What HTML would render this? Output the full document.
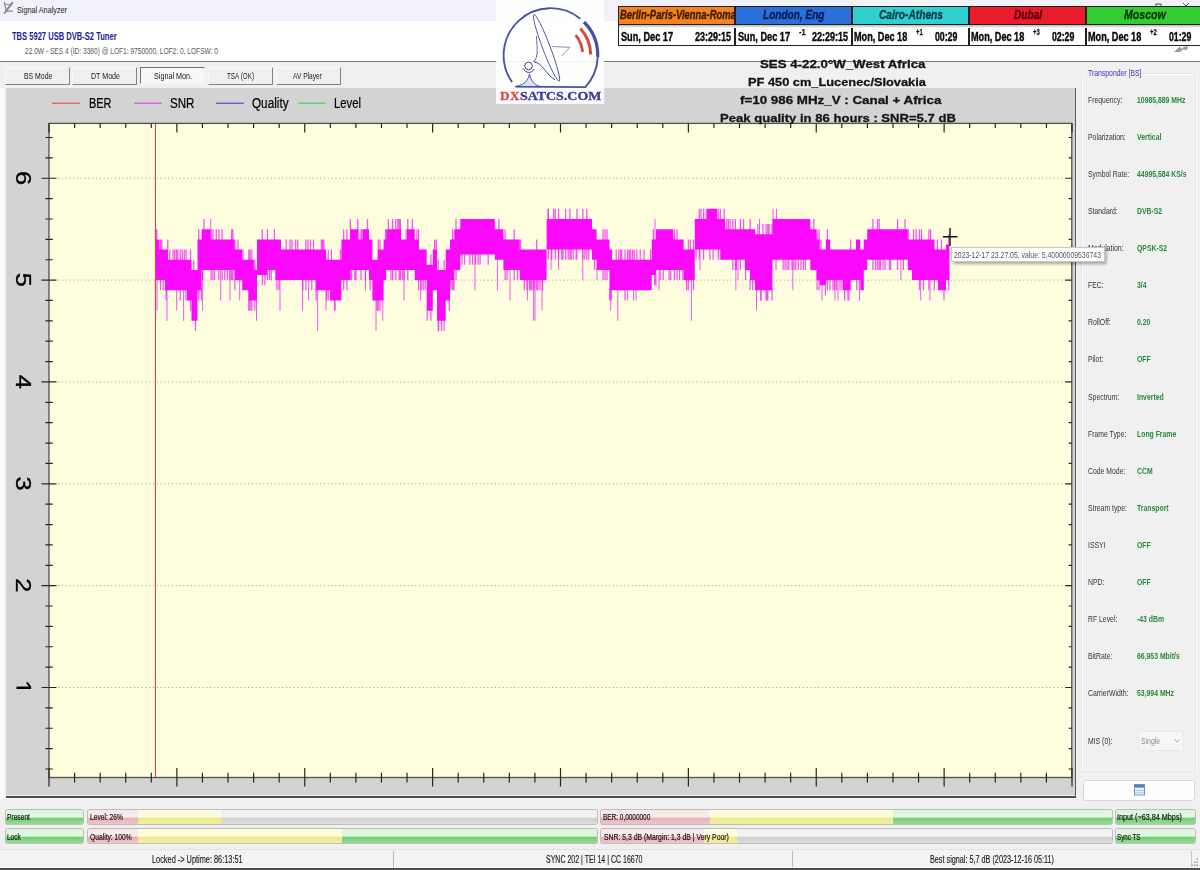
<!DOCTYPE html>
<html><head><meta charset="utf-8"><title>Signal Analyzer</title>
<style>
html,body{margin:0;padding:0}
body{width:1200px;height:870px;overflow:hidden;position:relative;background:#f0f0f0;font-family:"Liberation Sans",sans-serif}
.b{position:absolute;box-sizing:border-box}
.t{position:absolute;white-space:nowrap;line-height:1.2;transform-origin:0 50%;display:block;-webkit-font-smoothing:antialiased}
#root{position:absolute;left:0;top:0;width:1200px;height:870px;overflow:hidden;opacity:0.999}
svg{position:absolute;left:0;top:0}
</style></head><body><div id="root">
<div class="b" style="left:0px;top:0px;width:1200px;height:20.5px;background:#f1f1f9"></div>
<div class="b" style="left:0px;top:20.5px;width:1200px;height:40.5px;background:#ffffff"></div>
<div class="b" style="left:0px;top:61px;width:1200px;height:1.2px;background:#7a7a7a"></div>
<span class="t" style="left:16.80px;top:3.53px;font-size:9.8px;color:#1a1a1a;transform:scaleX(0.7401);">Signal Analyzer</span>
<svg width="16" height="16" viewBox="0 0 16 16" style="left:0px;top:0px"><g fill="none" stroke="#85858c" stroke-linecap="round"><path d="M4.3 2.3 L6.2 10.5" stroke-width="1.2"/><path d="M12.3 2.8 L4.6 13" stroke-width="2"/><path d="M5 4.2 L9.8 4.6" stroke-width="0.9"/><path d="M7.5 11.2 H12.2" stroke-width="1.3"/></g></svg>
<svg width="60" height="10" viewBox="0 0 60 10" style="left:1145px;top:0px"><g fill="none" stroke="#555" stroke-width="1"><rect x="11" y="4" width="5" height="6"/><path d="M38 3 L44 9 M44 3 L38 9"/></g></svg>
<span class="t" style="left:12.20px;top:30.02px;font-size:10.5px;color:#1c1c9c;transform:scaleX(0.7209);font-weight:bold;">TBS 5927 USB DVB-S2 Tuner</span>
<span class="t" style="left:24.50px;top:44.81px;font-size:9.5px;color:#5a5a5a;transform:scaleX(0.6950);">22.0W - SES 4 (ID: 3380) @ LOF1: 9750000, LOF2: 0, LOFSW: 0</span>
<div class="b" style="left:5px;top:67px;width:65px;height:17.6px;background:#f0f0f0;border:1px solid #f8f8f8;border-right:1.6px solid #828282;border-bottom:1.6px solid #828282"></div>
<span class="t" style="left:23.60px;top:70.03px;font-size:9.8px;color:#1a1a1a;transform:scaleX(0.7045);">BS Mode</span>
<div class="b" style="left:72px;top:67px;width:65px;height:17.6px;background:#f0f0f0;border:1px solid #f8f8f8;border-right:1.6px solid #828282;border-bottom:1.6px solid #828282"></div>
<span class="t" style="left:91.00px;top:70.03px;font-size:9.8px;color:#1a1a1a;transform:scaleX(0.7227);">DT Mode</span>
<div class="b" style="left:140px;top:66.8px;width:64.5px;height:17.7px;background:#f7f7f7;border:1px solid #f4f4f4;border-top:1.5px solid #707070;border-left:1.5px solid #707070"></div>
<span class="t" style="left:154.00px;top:70.03px;font-size:9.8px;color:#1a1a1a;transform:scaleX(0.7343);">Signal Mon.</span>
<div class="b" style="left:208px;top:67px;width:65px;height:17.6px;background:#f0f0f0;border:1px solid #f8f8f8;border-right:1.6px solid #828282;border-bottom:1.6px solid #828282"></div>
<span class="t" style="left:227.00px;top:70.03px;font-size:9.8px;color:#1a1a1a;transform:scaleX(0.6439);">TSA (OK)</span>
<div class="b" style="left:275.5px;top:67px;width:65.10000000000002px;height:17.6px;background:#f0f0f0;border:1px solid #f8f8f8;border-right:1.6px solid #828282;border-bottom:1.6px solid #828282"></div>
<span class="t" style="left:293.00px;top:70.03px;font-size:9.8px;color:#1a1a1a;transform:scaleX(0.6768);">AV Player</span>
<div class="b" style="left:0px;top:88px;width:3.6px;height:710px;background:#fafafa"></div>
<div class="b" style="left:6.4px;top:88px;width:1069.2px;height:707px;background:#d3d3d3"></div>
<div class="b" style="left:6.4px;top:795.6px;width:1069.8px;height:2.1px;background:#4c4c4c"></div>
<div class="b" style="left:0px;top:797.5px;width:1200px;height:1.2px;background:#fafafa"></div>
<div class="b" style="left:1074.8px;top:88px;width:1.2px;height:709.5px;background:#5c5c5c"></div>
<svg width="1200" height="870" viewBox="0 0 1200 870">
<rect x="49.0" y="123.4" width="1022.8" height="654.1" fill="#ffffe0"/>
<line x1="58.0" x2="1065.8" y1="687.50" y2="687.50" stroke="#98988a" stroke-width="0.9" stroke-dasharray="1.1 2.7"/>
<line x1="58.0" x2="1065.8" y1="585.65" y2="585.65" stroke="#98988a" stroke-width="0.9" stroke-dasharray="1.1 2.7"/>
<line x1="58.0" x2="1065.8" y1="483.80" y2="483.80" stroke="#98988a" stroke-width="0.9" stroke-dasharray="1.1 2.7"/>
<line x1="58.0" x2="1065.8" y1="381.95" y2="381.95" stroke="#98988a" stroke-width="0.9" stroke-dasharray="1.1 2.7"/>
<line x1="58.0" x2="1065.8" y1="280.10" y2="280.10" stroke="#98988a" stroke-width="0.9" stroke-dasharray="1.1 2.7"/>
<line x1="58.0" x2="1065.8" y1="178.25" y2="178.25" stroke="#98988a" stroke-width="0.9" stroke-dasharray="1.1 2.7"/>
<line x1="52" x2="80" y1="103.2" y2="103.2" stroke="#e82828" stroke-width="0.9"/>
<line x1="134" x2="162" y1="103.2" y2="103.2" stroke="#f020f0" stroke-width="0.9"/>
<line x1="216" x2="244" y1="103.2" y2="103.2" stroke="#2020d0" stroke-width="0.9"/>
<line x1="298" x2="326" y1="103.2" y2="103.2" stroke="#28d028" stroke-width="0.9"/>
<path d="M155.0 239.4 L159.5 239.4 L159.5 249.5 L165.0 249.5 L165.0 249.5 L168.0 249.5 L168.0 259.7 L187.0 259.7 L187.0 259.7 L191.5 259.7 L191.5 269.9 L197.5 269.9 L197.5 239.4 L201.7 239.4 L201.7 229.2 L210.3 229.2 L210.3 239.4 L234.5 239.4 L234.5 249.5 L242.2 249.5 L242.2 259.7 L248.3 259.7 L248.3 259.7 L253.4 259.7 L253.4 269.9 L257.0 269.9 L257.0 239.4 L267.0 239.4 L267.0 239.4 L276.0 239.4 L276.0 239.4 L281.0 239.4 L281.0 249.5 L315.5 249.5 L315.5 249.5 L326.0 249.5 L326.0 259.7 L330.0 259.7 L330.0 259.7 L341.4 259.7 L341.4 239.4 L350.0 239.4 L350.0 229.2 L358.6 229.2 L358.6 239.4 L363.0 239.4 L363.0 229.2 L369.0 229.2 L369.0 239.4 L372.4 239.4 L372.4 259.7 L377.6 259.7 L377.6 249.5 L383.6 249.5 L383.6 239.4 L386.2 239.4 L386.2 229.2 L401.0 229.2 L401.0 239.4 L407.0 239.4 L407.0 229.2 L414.7 229.2 L414.7 239.4 L419.0 239.4 L419.0 249.5 L426.7 249.5 L426.7 264.8 L432.8 264.8 L432.8 249.5 L437.0 249.5 L437.0 269.9 L445.7 269.9 L445.7 249.5 L450.0 249.5 L450.0 239.4 L454.3 239.4 L454.3 229.2 L460.3 229.2 L460.3 219.0 L494.8 219.0 L494.8 229.2 L503.4 229.2 L503.4 239.4 L519.8 239.4 L519.8 249.5 L546.6 249.5 L546.6 219.0 L550.0 219.0 L550.0 219.0 L592.0 219.0 L592.0 229.2 L596.6 229.2 L596.6 239.4 L609.5 239.4 L609.5 249.5 L612.0 249.5 L612.0 259.7 L651.7 259.7 L651.7 239.4 L656.0 239.4 L656.0 229.2 L673.3 229.2 L673.3 239.4 L683.6 239.4 L683.6 249.5 L694.8 249.5 L694.8 219.0 L707.0 219.0 L707.0 208.8 L717.2 208.8 L717.2 219.0 L720.7 219.0 L720.7 219.0 L725.0 219.0 L725.0 229.2 L744.8 229.2 L744.8 229.2 L750.0 229.2 L750.0 229.2 L755.0 229.2 L755.0 234.3 L772.4 234.3 L772.4 219.0 L810.3 219.0 L810.3 229.2 L816.4 229.2 L816.4 239.4 L819.8 239.4 L819.8 249.5 L825.9 249.5 L825.9 239.4 L830.2 239.4 L830.2 249.5 L843.0 249.5 L843.0 249.5 L850.0 249.5 L850.0 249.5 L856.0 249.5 L856.0 239.4 L860.3 239.4 L860.3 249.5 L863.8 249.5 L863.8 239.4 L867.2 239.4 L867.2 229.2 L907.8 229.2 L907.8 239.4 L912.0 239.4 L912.0 239.4 L934.5 239.4 L934.5 249.5 L938.0 249.5 L938.0 249.5 L946.0 249.5 L946.0 244.5 L949.5 244.5 L949.5 280.1 L946.0 280.1 L946.0 290.3 L938.0 290.3 L938.0 280.1 L934.5 280.1 L934.5 280.1 L912.0 280.1 L912.0 269.9 L907.8 269.9 L907.8 259.7 L867.2 259.7 L867.2 269.9 L863.8 269.9 L863.8 290.3 L860.3 290.3 L860.3 280.1 L856.0 280.1 L856.0 280.1 L850.0 280.1 L850.0 290.3 L843.0 290.3 L843.0 280.1 L830.2 280.1 L830.2 280.1 L825.9 280.1 L825.9 285.2 L819.8 285.2 L819.8 280.1 L816.4 280.1 L816.4 269.9 L810.3 269.9 L810.3 259.7 L772.4 259.7 L772.4 290.3 L755.0 290.3 L755.0 280.1 L750.0 280.1 L750.0 269.9 L744.8 269.9 L744.8 259.7 L725.0 259.7 L725.0 259.7 L720.7 259.7 L720.7 249.5 L717.2 249.5 L717.2 249.5 L707.0 249.5 L707.0 249.5 L694.8 249.5 L694.8 280.1 L683.6 280.1 L683.6 269.9 L673.3 269.9 L673.3 269.9 L656.0 269.9 L656.0 275.0 L651.7 275.0 L651.7 290.3 L612.0 290.3 L612.0 290.3 L609.5 290.3 L609.5 269.9 L596.6 269.9 L596.6 259.7 L592.0 259.7 L592.0 249.5 L550.0 249.5 L550.0 249.5 L546.6 249.5 L546.6 280.1 L519.8 280.1 L519.8 269.9 L503.4 269.9 L503.4 259.7 L494.8 259.7 L494.8 254.6 L460.3 254.6 L460.3 269.9 L454.3 269.9 L454.3 280.1 L450.0 280.1 L450.0 300.5 L445.7 300.5 L445.7 320.8 L437.0 320.8 L437.0 290.3 L432.8 290.3 L432.8 310.7 L426.7 310.7 L426.7 280.1 L419.0 280.1 L419.0 280.1 L414.7 280.1 L414.7 269.9 L407.0 269.9 L407.0 269.9 L401.0 269.9 L401.0 269.9 L386.2 269.9 L386.2 280.1 L383.6 280.1 L383.6 300.5 L377.6 300.5 L377.6 300.5 L372.4 300.5 L372.4 280.1 L369.0 280.1 L369.0 269.9 L363.0 269.9 L363.0 269.9 L358.6 269.9 L358.6 269.9 L350.0 269.9 L350.0 280.1 L341.4 280.1 L341.4 300.5 L330.0 300.5 L330.0 290.3 L326.0 290.3 L326.0 290.3 L315.5 290.3 L315.5 280.1 L281.0 280.1 L281.0 280.1 L276.0 280.1 L276.0 269.9 L267.0 269.9 L267.0 275.0 L257.0 275.0 L257.0 300.5 L253.4 300.5 L253.4 300.5 L248.3 300.5 L248.3 290.3 L242.2 290.3 L242.2 280.1 L234.5 280.1 L234.5 269.9 L210.3 269.9 L210.3 269.9 L201.7 269.9 L201.7 290.3 L197.5 290.3 L197.5 320.8 L191.5 320.8 L191.5 300.5 L187.0 300.5 L187.0 290.3 L168.0 290.3 L168.0 290.3 L165.0 290.3 L165.0 280.1 L159.5 280.1 L159.5 280.1 L155.0 280.1Z" fill="#fc08fc"/>
<path d="M155.5 240.4V229.2M155.5 279.1V290.3M156.8 240.4V229.2M160.5 250.5V239.4M160.5 279.1V290.3M161.8 250.5V239.4M163.1 279.1V290.3M166.1 289.3V300.5M167.8 250.5V239.4M169.8 260.7V249.5M173.0 260.7V249.5M174.7 260.7V249.5M176.4 260.7V249.5M177.7 260.7V249.5M180.3 260.7V249.5M180.3 289.3V300.5M182.3 260.7V249.5M184.3 260.7V249.5M186.0 260.7V249.5M186.0 289.3V300.5M190.6 260.7V249.5M190.6 299.5V310.7M193.8 270.9V259.7M195.5 319.8V331.0M198.8 240.4V229.2M198.8 289.3V300.5M201.4 289.3V300.5M202.7 268.9V280.1M204.0 230.2V219.0M211.2 240.4V229.2M211.2 268.9V280.1M212.9 240.4V229.2M212.9 268.9V280.1M214.6 268.9V280.1M216.3 240.4V229.2M218.9 240.4V229.2M218.9 268.9V280.1M222.1 240.4V229.2M222.1 268.9V280.1M224.7 268.9V280.1M227.3 268.9V280.1M229.9 268.9V280.1M231.6 240.4V229.2M231.6 268.9V280.1M232.9 240.4V229.2M232.9 268.9V280.1M234.9 250.5V239.4M234.9 279.1V290.3M238.1 250.5V239.4M243.0 260.7V249.5M248.8 260.7V249.5M248.8 299.5V310.7M250.1 260.7V249.5M250.1 299.5V310.7M251.8 260.7V249.5M251.8 299.5V310.7M253.5 270.9V259.7M254.8 270.9V259.7M254.8 299.5V310.7M262.3 240.4V229.2M262.3 274.0V285.2M264.9 274.0V285.2M267.5 240.4V229.2M267.5 268.9V280.1M269.5 268.9V280.1M271.2 268.9V280.1M274.4 240.4V229.2M275.7 268.9V280.1M277.0 279.1V290.3M279.0 279.1V290.3M286.1 250.5V239.4M290.0 250.5V239.4M292.0 250.5V239.4M295.7 250.5V239.4M297.7 250.5V239.4M302.9 279.1V290.3M305.9 250.5V239.4M305.9 279.1V290.3M307.9 250.5V239.4M310.5 250.5V239.4M311.8 279.1V290.3M313.5 250.5V239.4M316.1 289.3V300.5M321.3 250.5V239.4M322.6 250.5V239.4M323.9 250.5V239.4M326.5 289.3V300.5M328.2 260.7V249.5M328.2 289.3V300.5M331.4 260.7V249.5M334.7 299.5V310.7M340.5 260.7V249.5M343.7 240.4V229.2M343.7 279.1V290.3M346.9 240.4V229.2M346.9 279.1V290.3M350.3 230.2V219.0M350.3 268.9V280.1M351.6 268.9V280.1M354.8 268.9V280.1M356.1 268.9V280.1M357.8 230.2V219.0M361.0 240.4V229.2M361.0 268.9V280.1M362.3 240.4V229.2M365.5 268.9V280.1M367.5 230.2V219.0M370.1 279.1V290.3M377.0 299.5V310.7M378.3 250.5V239.4M378.3 299.5V310.7M380.0 250.5V239.4M380.0 299.5V310.7M385.7 240.4V229.2M388.3 230.2V219.0M390.9 268.9V280.1M392.6 230.2V219.0M392.6 268.9V280.1M395.8 230.2V219.0M395.8 268.9V280.1M397.8 230.2V219.0M399.1 230.2V219.0M399.1 268.9V280.1M400.4 230.2V219.0M400.4 268.9V280.1M402.4 268.9V280.1M404.1 268.9V280.1M406.1 240.4V229.2M407.8 230.2V219.0M407.8 268.9V280.1M412.4 230.2V219.0M416.9 240.4V229.2M418.6 240.4V229.2M418.6 279.1V290.3M421.2 279.1V290.3M423.2 279.1V290.3M425.2 279.1V290.3M427.2 309.7V320.8M430.9 265.8V254.6M430.9 309.7V320.8M434.6 250.5V239.4M436.3 250.5V239.4M438.3 270.9V259.7M438.3 319.8V331.0M441.5 319.8V331.0M444.1 270.9V259.7M444.1 319.8V331.0M449.3 299.5V310.7M451.0 279.1V290.3M452.7 240.4V229.2M452.7 279.1V290.3M454.0 279.1V290.3M456.0 230.2V219.0M456.0 268.9V280.1M461.9 253.6V264.8M464.5 253.6V264.8M469.9 253.6V264.8M472.5 253.6V264.8M475.5 253.6V264.8M478.1 253.6V264.8M480.1 253.6V264.8M488.2 253.6V264.8M498.9 230.2V219.0M505.1 240.4V229.2M505.1 268.9V280.1M507.1 268.9V280.1M514.2 240.4V229.2M514.2 268.9V280.1M517.4 268.9V280.1M520.6 250.5V239.4M524.3 279.1V290.3M526.9 279.1V290.3M529.5 279.1V290.3M530.8 279.1V290.3M532.1 279.1V290.3M534.1 279.1V290.3M536.7 250.5V239.4M536.7 279.1V290.3M538.0 279.1V290.3M540.0 279.1V290.3M542.6 279.1V290.3M548.4 220.0V208.8M548.4 248.5V259.7M551.6 248.5V259.7M553.6 220.0V208.8M555.3 220.0V208.8M555.3 248.5V259.7M558.5 220.0V208.8M558.5 248.5V259.7M561.7 248.5V259.7M563.0 248.5V259.7M565.6 220.0V208.8M565.6 248.5V259.7M568.2 248.5V259.7M569.9 220.0V208.8M569.9 248.5V259.7M571.2 248.5V259.7M573.2 248.5V259.7M576.9 220.0V208.8M576.9 248.5V259.7M582.8 220.0V208.8M582.8 248.5V259.7M584.8 248.5V259.7M586.8 220.0V208.8M586.8 248.5V259.7M588.8 248.5V259.7M594.6 258.7V269.9M603.0 240.4V229.2M603.0 268.9V280.1M605.0 240.4V229.2M605.0 268.9V280.1M607.0 240.4V229.2M607.0 268.9V280.1M609.6 289.3V300.5M611.3 289.3V300.5M616.2 260.7V249.5M618.8 260.7V249.5M620.5 260.7V249.5M621.8 260.7V249.5M625.0 260.7V249.5M625.0 289.3V300.5M627.6 260.7V249.5M629.3 260.7V249.5M630.6 260.7V249.5M632.6 260.7V249.5M634.3 260.7V249.5M636.9 260.7V249.5M640.2 260.7V249.5M644.1 260.7V249.5M650.7 260.7V249.5M653.3 240.4V229.2M654.6 274.0V285.2M655.9 274.0V285.2M660.2 268.9V280.1M663.2 268.9V280.1M669.0 268.9V280.1M670.7 268.9V280.1M674.4 240.4V229.2M674.4 268.9V280.1M677.0 240.4V229.2M677.0 268.9V280.1M679.6 268.9V280.1M682.9 268.9V280.1M686.6 279.1V290.3M688.3 250.5V239.4M688.3 279.1V290.3M690.3 250.5V239.4M693.5 250.5V239.4M693.5 279.1V290.3M696.1 248.5V259.7M699.3 220.0V208.8M699.3 248.5V259.7M701.0 220.0V208.8M703.6 220.0V208.8M703.6 248.5V259.7M706.2 220.0V208.8M709.9 248.5V259.7M713.1 248.5V259.7M718.3 220.0V208.8M718.3 248.5V259.7M720.3 220.0V208.8M720.3 248.5V259.7M724.2 220.0V208.8M726.8 230.2V219.0M728.5 230.2V219.0M730.2 230.2V219.0M732.8 230.2V219.0M732.8 258.7V269.9M735.4 230.2V219.0M735.4 258.7V269.9M736.7 258.7V269.9M740.4 230.2V219.0M740.4 258.7V269.9M743.6 230.2V219.0M745.6 268.9V280.1M750.1 230.2V219.0M750.1 279.1V290.3M752.7 279.1V290.3M757.9 235.3V224.1M760.9 289.3V300.5M762.9 235.3V224.1M766.1 235.3V224.1M766.1 289.3V300.5M767.8 235.3V224.1M767.8 289.3V300.5M769.1 235.3V224.1M772.1 235.3V224.1M772.1 289.3V300.5M776.0 258.7V269.9M783.1 258.7V269.9M785.1 258.7V269.9M787.1 258.7V269.9M788.8 258.7V269.9M792.0 258.7V269.9M794.0 258.7V269.9M795.7 258.7V269.9M798.3 258.7V269.9M800.9 258.7V269.9M803.5 258.7V269.9M805.5 258.7V269.9M813.9 230.2V219.0M817.1 240.4V229.2M817.1 279.1V290.3M819.1 240.4V229.2M819.1 279.1V290.3M821.1 250.5V239.4M825.4 284.2V295.4M827.4 240.4V229.2M827.4 279.1V290.3M830.0 279.1V290.3M833.0 279.1V290.3M834.7 279.1V290.3M836.7 279.1V290.3M840.0 279.1V290.3M842.0 279.1V290.3M844.6 289.3V300.5M848.9 289.3V300.5M850.6 250.5V239.4M850.6 279.1V290.3M856.8 279.1V290.3M872.9 230.2V219.0M872.9 258.7V269.9M875.5 258.7V269.9M877.5 230.2V219.0M877.5 258.7V269.9M879.2 230.2V219.0M879.2 258.7V269.9M880.5 258.7V269.9M883.1 258.7V269.9M885.1 258.7V269.9M889.4 258.7V269.9M890.7 258.7V269.9M897.6 230.2V219.0M897.6 258.7V269.9M903.4 258.7V269.9M905.1 230.2V219.0M908.3 240.4V229.2M913.5 240.4V229.2M916.1 240.4V229.2M919.5 240.4V229.2M919.5 279.1V290.3M921.5 240.4V229.2M923.5 279.1V290.3M928.9 240.4V229.2M928.9 279.1V290.3M930.6 240.4V229.2M934.3 279.1V290.3M937.5 250.5V239.4M941.4 250.5V239.4M944.0 289.3V300.5M948.6 245.5V234.3M948.6 279.1V290.3" stroke="#fc08fc" stroke-width="1.25" stroke-opacity="0.72" fill="none"/>
<path d="M157.0 279.1V310.7M167.0 289.3V320.8M176.7 289.3V310.7M183.6 289.3V320.8M202.6 268.9V310.7M220.7 268.9V300.5M230.0 268.9V300.5M239.7 279.1V300.5M256.5 299.5V320.8M280.0 279.1V310.7M302.6 279.1V310.7M308.6 279.1V300.5M317.6 289.3V331.0M326.0 289.3V310.7M335.0 299.5V310.7M365.5 268.9V290.3M376.0 299.5V331.0M382.8 299.5V320.8M404.0 268.9V300.5M420.7 279.1V300.5M438.8 319.8V331.0M475.0 253.6V290.3M497.4 258.7V290.3M510.0 268.9V300.5M527.6 279.1V300.5M533.6 279.1V320.8M535.0 279.1V320.8M542.0 279.1V310.7M551.0 248.5V269.9M558.6 248.5V269.9M576.0 248.5V259.7M582.8 248.5V280.1M597.0 268.9V280.1M610.7 289.3V310.7M617.8 289.3V320.8M627.6 289.3V300.5M633.6 289.3V300.5M636.0 289.3V300.5M659.0 268.9V290.3M691.4 279.1V320.8M700.0 248.5V269.9M735.9 258.7V290.3M738.0 258.7V280.1M756.5 289.3V310.7M761.0 289.3V300.5M767.0 289.3V300.5M792.8 258.7V290.3M822.0 284.2V300.5M835.0 279.1V300.5M838.0 279.1V300.5M847.8 289.3V300.5M859.5 279.1V300.5M920.7 279.1V300.5M930.0 279.1V300.5M900.9 258.7V280.1M210.7 240.4V219.0M548.0 220.0V208.8M655.0 240.4V219.0M773.0 220.0V208.8M776.5 220.0V208.8M759.5 235.3V219.0" stroke="#f410f4" stroke-width="1.0" stroke-opacity="0.7" fill="none"/>
<line x1="155.5" x2="155.5" y1="123.4" y2="777.5" stroke="#e84040" stroke-width="1.1"/>
<rect x="49.0" y="123.4" width="1022.8" height="654.1" fill="none" stroke="#555550" stroke-width="1.35"/>
<path d="M49.00 768.0V786.5M49.00 123.4V132.4M74.58 772.7V782.5M74.58 123.4V128.0M100.15 772.7V782.5M100.15 123.4V128.0M125.72 772.7V782.5M125.72 123.4V128.0M151.30 772.7V782.5M151.30 123.4V128.0M176.88 768.0V786.5M176.88 123.4V132.4M202.45 772.7V782.5M202.45 123.4V128.0M228.03 772.7V782.5M228.03 123.4V128.0M253.60 772.7V782.5M253.60 123.4V128.0M279.17 772.7V782.5M279.17 123.4V128.0M304.75 768.0V786.5M304.75 123.4V132.4M330.32 772.7V782.5M330.32 123.4V128.0M355.90 772.7V782.5M355.90 123.4V128.0M381.47 772.7V782.5M381.47 123.4V128.0M407.05 772.7V782.5M407.05 123.4V128.0M432.62 768.0V786.5M432.62 123.4V132.4M458.20 772.7V782.5M458.20 123.4V128.0M483.77 772.7V782.5M483.77 123.4V128.0M509.35 772.7V782.5M509.35 123.4V128.0M534.92 772.7V782.5M534.92 123.4V128.0M560.50 768.0V786.5M560.50 123.4V132.4M586.07 772.7V782.5M586.07 123.4V128.0M611.65 772.7V782.5M611.65 123.4V128.0M637.23 772.7V782.5M637.23 123.4V128.0M662.80 772.7V782.5M662.80 123.4V128.0M688.38 768.0V786.5M688.38 123.4V132.4M713.95 772.7V782.5M713.95 123.4V128.0M739.52 772.7V782.5M739.52 123.4V128.0M765.10 772.7V782.5M765.10 123.4V128.0M790.67 772.7V782.5M790.67 123.4V128.0M816.25 768.0V786.5M816.25 123.4V132.4M841.82 772.7V782.5M841.82 123.4V128.0M867.40 772.7V782.5M867.40 123.4V128.0M892.98 772.7V782.5M892.98 123.4V128.0M918.55 772.7V782.5M918.55 123.4V128.0M944.12 768.0V786.5M944.12 123.4V132.4M969.70 772.7V782.5M969.70 123.4V128.0M995.27 772.7V782.5M995.27 123.4V128.0M1020.85 772.7V782.5M1020.85 123.4V128.0M1046.42 772.7V782.5M1046.42 123.4V128.0M1072.00 768.0V786.5M1072.00 123.4V132.4M45.4 768.98H52.8M1068.6 768.98H1071.8M45.4 748.61H52.8M1068.6 748.61H1071.8M45.4 728.24H52.8M1068.6 728.24H1071.8M45.4 707.87H52.8M1068.6 707.87H1071.8M41.5 687.50H56.5M1065.3 687.50H1071.8M45.4 667.13H52.8M1068.6 667.13H1071.8M45.4 646.76H52.8M1068.6 646.76H1071.8M45.4 626.39H52.8M1068.6 626.39H1071.8M45.4 606.02H52.8M1068.6 606.02H1071.8M41.5 585.65H56.5M1065.3 585.65H1071.8M45.4 565.28H52.8M1068.6 565.28H1071.8M45.4 544.91H52.8M1068.6 544.91H1071.8M45.4 524.54H52.8M1068.6 524.54H1071.8M45.4 504.17H52.8M1068.6 504.17H1071.8M41.5 483.80H56.5M1065.3 483.80H1071.8M45.4 463.43H52.8M1068.6 463.43H1071.8M45.4 443.06H52.8M1068.6 443.06H1071.8M45.4 422.69H52.8M1068.6 422.69H1071.8M45.4 402.32H52.8M1068.6 402.32H1071.8M41.5 381.95H56.5M1065.3 381.95H1071.8M45.4 361.58H52.8M1068.6 361.58H1071.8M45.4 341.21H52.8M1068.6 341.21H1071.8M45.4 320.84H52.8M1068.6 320.84H1071.8M45.4 300.47H52.8M1068.6 300.47H1071.8M41.5 280.10H56.5M1065.3 280.10H1071.8M45.4 259.73H52.8M1068.6 259.73H1071.8M45.4 239.36H52.8M1068.6 239.36H1071.8M45.4 218.99H52.8M1068.6 218.99H1071.8M45.4 198.62H52.8M1068.6 198.62H1071.8M41.5 178.25H56.5M1065.3 178.25H1071.8M45.4 157.88H52.8M1068.6 157.88H1071.8M45.4 137.51H52.8M1068.6 137.51H1071.8" stroke="#262626" stroke-width="1.2" fill="none"/>
</svg>
<span class="t" style="left:89.00px;top:94.76px;font-size:14px;color:#000;transform:scaleX(0.7816);-webkit-text-stroke:0.2px #000;">BER</span>
<span class="t" style="left:170.00px;top:94.76px;font-size:14px;color:#000;transform:scaleX(0.8288);-webkit-text-stroke:0.2px #000;">SNR</span>
<span class="t" style="left:252.00px;top:94.76px;font-size:14px;color:#000;transform:scaleX(0.8377);-webkit-text-stroke:0.2px #000;">Quality</span>
<span class="t" style="left:334.00px;top:94.76px;font-size:14px;color:#000;transform:scaleX(0.8067);-webkit-text-stroke:0.2px #000;">Level</span>
<span class="t" style="left:0;top:0;font-size:25.5px;color:#000;-webkit-text-stroke:0.35px #000;line-height:1;width:14px;height:25.5px;text-align:center;transform-origin:50% 50%;transform:translate(16.3px,674.5px) scaleX(0.83) rotate(90deg)"><span style="display:inline-block;clip-path:inset(0 0 6.9px 0);transform:translateY(1.6px) scaleY(1.09);transform-origin:50% 40%">1</span></span>
<span class="t" style="left:0;top:0;font-size:25.5px;color:#000;-webkit-text-stroke:0.35px #000;line-height:1;width:14px;height:25.5px;text-align:center;transform-origin:50% 50%;transform:translate(16.3px,572.6px) scaleX(0.83) rotate(90deg)">2</span>
<span class="t" style="left:0;top:0;font-size:25.5px;color:#000;-webkit-text-stroke:0.35px #000;line-height:1;width:14px;height:25.5px;text-align:center;transform-origin:50% 50%;transform:translate(16.3px,470.7px) scaleX(0.83) rotate(90deg)">3</span>
<span class="t" style="left:0;top:0;font-size:25.5px;color:#000;-webkit-text-stroke:0.35px #000;line-height:1;width:14px;height:25.5px;text-align:center;transform-origin:50% 50%;transform:translate(16.3px,368.9px) scaleX(0.83) rotate(90deg)">4</span>
<span class="t" style="left:0;top:0;font-size:25.5px;color:#000;-webkit-text-stroke:0.35px #000;line-height:1;width:14px;height:25.5px;text-align:center;transform-origin:50% 50%;transform:translate(16.3px,267.1px) scaleX(0.83) rotate(90deg)">5</span>
<span class="t" style="left:0;top:0;font-size:25.5px;color:#000;-webkit-text-stroke:0.35px #000;line-height:1;width:14px;height:25.5px;text-align:center;transform-origin:50% 50%;transform:translate(16.3px,165.2px) scaleX(0.83) rotate(90deg)">6</span>
<div class="b" style="left:1081px;top:72.5px;width:114.5px;height:700px;border:1px solid #e4e4e4;border-radius:2px;box-shadow:1px 1px 0 #fbfbfb, inset 1px 1px 0 #fbfbfb"></div>
<div class="b" style="left:1086px;top:66px;width:57px;height:13px;background:#f0f0f0"></div>
<span class="t" style="left:1088.00px;top:66.83px;font-size:9.8px;color:#3a34c4;transform:scaleX(0.6998);">Transponder [BS]</span>
<span class="t" style="left:1088.00px;top:93.73px;font-size:9.8px;color:#363636;transform:scaleX(0.7000);">Frequency:</span>
<span class="t" style="left:1137.00px;top:93.73px;font-size:9.8px;color:#2a8a3a;transform:scaleX(0.7000);font-weight:bold;">10985,889 MHz</span>
<span class="t" style="left:1088.00px;top:130.83px;font-size:9.8px;color:#363636;transform:scaleX(0.7000);">Polarization:</span>
<span class="t" style="left:1137.00px;top:130.83px;font-size:9.8px;color:#2a8a3a;transform:scaleX(0.7000);font-weight:bold;">Vertical</span>
<span class="t" style="left:1088.00px;top:167.93px;font-size:9.8px;color:#363636;transform:scaleX(0.7000);">Symbol Rate:</span>
<span class="t" style="left:1137.00px;top:167.93px;font-size:9.8px;color:#2a8a3a;transform:scaleX(0.7000);font-weight:bold;">44995,584 KS/s</span>
<span class="t" style="left:1088.00px;top:205.03px;font-size:9.8px;color:#363636;transform:scaleX(0.7000);">Standard:</span>
<span class="t" style="left:1137.00px;top:205.03px;font-size:9.8px;color:#2a8a3a;transform:scaleX(0.7000);font-weight:bold;">DVB-S2</span>
<span class="t" style="left:1088.00px;top:242.13px;font-size:9.8px;color:#363636;transform:scaleX(0.7000);">Modulation:</span>
<span class="t" style="left:1137.00px;top:242.13px;font-size:9.8px;color:#2a8a3a;transform:scaleX(0.7000);font-weight:bold;">QPSK-S2</span>
<span class="t" style="left:1088.00px;top:279.23px;font-size:9.8px;color:#363636;transform:scaleX(0.7000);">FEC:</span>
<span class="t" style="left:1137.00px;top:279.23px;font-size:9.8px;color:#2a8a3a;transform:scaleX(0.7000);font-weight:bold;">3/4</span>
<span class="t" style="left:1088.00px;top:316.33px;font-size:9.8px;color:#363636;transform:scaleX(0.7000);">RollOff:</span>
<span class="t" style="left:1137.00px;top:316.33px;font-size:9.8px;color:#2a8a3a;transform:scaleX(0.7000);font-weight:bold;">0.20</span>
<span class="t" style="left:1088.00px;top:353.43px;font-size:9.8px;color:#363636;transform:scaleX(0.7000);">Pilot:</span>
<span class="t" style="left:1137.00px;top:353.43px;font-size:9.8px;color:#2a8a3a;transform:scaleX(0.7000);font-weight:bold;">OFF</span>
<span class="t" style="left:1088.00px;top:390.53px;font-size:9.8px;color:#363636;transform:scaleX(0.7000);">Spectrum:</span>
<span class="t" style="left:1137.00px;top:390.53px;font-size:9.8px;color:#2a8a3a;transform:scaleX(0.7000);font-weight:bold;">Inverted</span>
<span class="t" style="left:1088.00px;top:427.63px;font-size:9.8px;color:#363636;transform:scaleX(0.7000);">Frame Type:</span>
<span class="t" style="left:1137.00px;top:427.63px;font-size:9.8px;color:#2a8a3a;transform:scaleX(0.7000);font-weight:bold;">Long Frame</span>
<span class="t" style="left:1088.00px;top:464.73px;font-size:9.8px;color:#363636;transform:scaleX(0.7000);">Code Mode:</span>
<span class="t" style="left:1137.00px;top:464.73px;font-size:9.8px;color:#2a8a3a;transform:scaleX(0.7000);font-weight:bold;">CCM</span>
<span class="t" style="left:1088.00px;top:501.83px;font-size:9.8px;color:#363636;transform:scaleX(0.7000);">Stream type:</span>
<span class="t" style="left:1137.00px;top:501.83px;font-size:9.8px;color:#2a8a3a;transform:scaleX(0.7000);font-weight:bold;">Transport</span>
<span class="t" style="left:1088.00px;top:538.93px;font-size:9.8px;color:#363636;transform:scaleX(0.7000);">ISSYI</span>
<span class="t" style="left:1137.00px;top:538.93px;font-size:9.8px;color:#2a8a3a;transform:scaleX(0.7000);font-weight:bold;">OFF</span>
<span class="t" style="left:1088.00px;top:576.03px;font-size:9.8px;color:#363636;transform:scaleX(0.7000);">NPD:</span>
<span class="t" style="left:1137.00px;top:576.03px;font-size:9.8px;color:#2a8a3a;transform:scaleX(0.7000);font-weight:bold;">OFF</span>
<span class="t" style="left:1088.00px;top:613.13px;font-size:9.8px;color:#363636;transform:scaleX(0.7000);">RF Level:</span>
<span class="t" style="left:1137.00px;top:613.13px;font-size:9.8px;color:#2a8a3a;transform:scaleX(0.7000);font-weight:bold;">-43 dBm</span>
<span class="t" style="left:1088.00px;top:650.23px;font-size:9.8px;color:#363636;transform:scaleX(0.7000);">BitRate:</span>
<span class="t" style="left:1137.00px;top:650.23px;font-size:9.8px;color:#2a8a3a;transform:scaleX(0.7000);font-weight:bold;">66,953 Mbit/s</span>
<span class="t" style="left:1088.00px;top:687.33px;font-size:9.8px;color:#363636;transform:scaleX(0.7000);">CarrierWidth:</span>
<span class="t" style="left:1137.00px;top:687.33px;font-size:9.8px;color:#2a8a3a;transform:scaleX(0.7000);font-weight:bold;">53,994 MHz</span>
<span class="t" style="left:1088.00px;top:735.23px;font-size:9.8px;color:#363636;transform:scaleX(0.7000);">MIS (0):</span>
<div class="b" style="left:1138px;top:731px;width:45.5px;height:19.5px;background:#f6f6f6;border:1px solid #e9e9e9;border-radius:2px"></div>
<span class="t" style="left:1140.50px;top:735.23px;font-size:9.8px;color:#8a8a8a;transform:scaleX(0.7000);">Single</span>
<svg width="10" height="8" viewBox="0 0 10 8" style="left:1172px;top:737px"><path d="M2.5 2.5 L5 5 L7.5 2.5" fill="none" stroke="#a0a0a0" stroke-width="0.9"/></svg>
<div class="b" style="left:1083px;top:780.4px;width:111.5px;height:20.2px;background:#fdfdfd;border:1px solid #d8d8d8;border-radius:3px"></div>
<svg width="12" height="12" viewBox="0 0 12 12" style="left:1133.5px;top:784.2px"><rect x="0.5" y="0.5" width="10" height="10.5" fill="#eef4fb" stroke="#6f94c4" stroke-width="1"/><rect x="1" y="1" width="9" height="2.6" fill="#4f7fc0"/><path d="M1 6.5H10M1 8.8H10" stroke="#9ab4d8" stroke-width="0.8"/></svg>
<div class="b" style="left:5px;top:809.0px;width:78.8px;height:15.6px;border:1px solid #bdbdbd;border-radius:2.5px;overflow:hidden;background:#e6e6e6"><div class="b" style="left:-1.0px;top:-1px;width:78.8px;height:15.6px;background:linear-gradient(to bottom,rgba(255,255,255,0) 0%,rgba(255,255,255,.3) 48%,rgba(255,255,255,0) 58%,rgba(255,255,255,.28) 100%),linear-gradient(to bottom,#d8f5d8 0%,#d8f5d8 50%,#74d074 58%,#74d074 100%)"></div></div>
<div class="b" style="left:5px;top:828.3px;width:78.8px;height:15.6px;border:1px solid #bdbdbd;border-radius:2.5px;overflow:hidden;background:#e6e6e6"><div class="b" style="left:-1.0px;top:-1px;width:78.8px;height:15.6px;background:linear-gradient(to bottom,rgba(255,255,255,0) 0%,rgba(255,255,255,.3) 48%,rgba(255,255,255,0) 58%,rgba(255,255,255,.28) 100%),linear-gradient(to bottom,#d8f5d8 0%,#d8f5d8 50%,#74d074 58%,#74d074 100%)"></div></div>
<div class="b" style="left:86.5px;top:809.0px;width:511px;height:15.6px;border:1px solid #bdbdbd;border-radius:2.5px;overflow:hidden;background:#e6e6e6"><div class="b" style="left:-1.0px;top:-1px;width:51.5px;height:15.6px;background:linear-gradient(to bottom,rgba(255,255,255,0) 0%,rgba(255,255,255,.3) 48%,rgba(255,255,255,0) 58%,rgba(255,255,255,.28) 100%),linear-gradient(to bottom,#f9e4e4 0%,#f9e4e4 50%,#e8b2b6 58%,#e8b2b6 100%)"></div><div class="b" style="left:50.5px;top:-1px;width:82.5px;height:15.6px;background:linear-gradient(to bottom,rgba(255,255,255,0) 0%,rgba(255,255,255,.3) 48%,rgba(255,255,255,0) 58%,rgba(255,255,255,.28) 100%),linear-gradient(to bottom,#fdfdd4 0%,#fdfdd4 50%,#eeea88 58%,#eeea88 100%)"></div><div class="b" style="left:133.0px;top:-1px;width:377.0px;height:15.6px;background:linear-gradient(to bottom,rgba(255,255,255,0) 0%,rgba(255,255,255,.3) 48%,rgba(255,255,255,0) 58%,rgba(255,255,255,.28) 100%),linear-gradient(to bottom,#eeeeee 0%,#eeeeee 50%,#d2d2d2 58%,#d2d2d2 100%)"></div></div>
<div class="b" style="left:86.5px;top:828.3px;width:511px;height:15.6px;border:1px solid #bdbdbd;border-radius:2.5px;overflow:hidden;background:#e6e6e6"><div class="b" style="left:-1.0px;top:-1px;width:51.5px;height:15.6px;background:linear-gradient(to bottom,rgba(255,255,255,0) 0%,rgba(255,255,255,.3) 48%,rgba(255,255,255,0) 58%,rgba(255,255,255,.28) 100%),linear-gradient(to bottom,#f9e4e4 0%,#f9e4e4 50%,#e8b2b6 58%,#e8b2b6 100%)"></div><div class="b" style="left:50.5px;top:-1px;width:204.0px;height:15.6px;background:linear-gradient(to bottom,rgba(255,255,255,0) 0%,rgba(255,255,255,.3) 48%,rgba(255,255,255,0) 58%,rgba(255,255,255,.28) 100%),linear-gradient(to bottom,#fdfdd4 0%,#fdfdd4 50%,#eeea88 58%,#eeea88 100%)"></div><div class="b" style="left:254.5px;top:-1px;width:255.5px;height:15.6px;background:linear-gradient(to bottom,rgba(255,255,255,0) 0%,rgba(255,255,255,.3) 48%,rgba(255,255,255,0) 58%,rgba(255,255,255,.28) 100%),linear-gradient(to bottom,#d8f5d8 0%,#d8f5d8 50%,#74d074 58%,#74d074 100%)"></div></div>
<div class="b" style="left:600px;top:809.0px;width:512.5px;height:15.6px;border:1px solid #bdbdbd;border-radius:2.5px;overflow:hidden;background:#e6e6e6"><div class="b" style="left:-1.0px;top:-1px;width:110.0px;height:15.6px;background:linear-gradient(to bottom,rgba(255,255,255,0) 0%,rgba(255,255,255,.3) 48%,rgba(255,255,255,0) 58%,rgba(255,255,255,.28) 100%),linear-gradient(to bottom,#f9e4e4 0%,#f9e4e4 50%,#e8b2b6 58%,#e8b2b6 100%)"></div><div class="b" style="left:109.0px;top:-1px;width:183.0px;height:15.6px;background:linear-gradient(to bottom,rgba(255,255,255,0) 0%,rgba(255,255,255,.3) 48%,rgba(255,255,255,0) 58%,rgba(255,255,255,.28) 100%),linear-gradient(to bottom,#fdfdd4 0%,#fdfdd4 50%,#eeea88 58%,#eeea88 100%)"></div><div class="b" style="left:292.0px;top:-1px;width:219.5px;height:15.6px;background:linear-gradient(to bottom,rgba(255,255,255,0) 0%,rgba(255,255,255,.3) 48%,rgba(255,255,255,0) 58%,rgba(255,255,255,.28) 100%),linear-gradient(to bottom,#d8f5d8 0%,#d8f5d8 50%,#74d074 58%,#74d074 100%)"></div></div>
<div class="b" style="left:600px;top:828.3px;width:512.5px;height:15.6px;border:1px solid #bdbdbd;border-radius:2.5px;overflow:hidden;background:#e6e6e6"><div class="b" style="left:-1.0px;top:-1px;width:104.3px;height:15.6px;background:linear-gradient(to bottom,rgba(255,255,255,0) 0%,rgba(255,255,255,.3) 48%,rgba(255,255,255,0) 58%,rgba(255,255,255,.28) 100%),linear-gradient(to bottom,#f9e4e4 0%,#f9e4e4 50%,#e8b2b6 58%,#e8b2b6 100%)"></div><div class="b" style="left:103.3px;top:-1px;width:32.5px;height:15.6px;background:linear-gradient(to bottom,rgba(255,255,255,0) 0%,rgba(255,255,255,.3) 48%,rgba(255,255,255,0) 58%,rgba(255,255,255,.28) 100%),linear-gradient(to bottom,#fdfdd4 0%,#fdfdd4 50%,#eeea88 58%,#eeea88 100%)"></div><div class="b" style="left:135.8px;top:-1px;width:375.7px;height:15.6px;background:linear-gradient(to bottom,rgba(255,255,255,0) 0%,rgba(255,255,255,.3) 48%,rgba(255,255,255,0) 58%,rgba(255,255,255,.28) 100%),linear-gradient(to bottom,#eeeeee 0%,#eeeeee 50%,#d2d2d2 58%,#d2d2d2 100%)"></div></div>
<div class="b" style="left:1115px;top:809.0px;width:80.5px;height:15.6px;border:1px solid #bdbdbd;border-radius:2.5px;overflow:hidden;background:#e6e6e6"><div class="b" style="left:-1.0px;top:-1px;width:80.5px;height:15.6px;background:linear-gradient(to bottom,rgba(255,255,255,0) 0%,rgba(255,255,255,.3) 48%,rgba(255,255,255,0) 58%,rgba(255,255,255,.28) 100%),linear-gradient(to bottom,#d8f5d8 0%,#d8f5d8 50%,#74d074 58%,#74d074 100%)"></div></div>
<div class="b" style="left:1115px;top:828.3px;width:80.5px;height:15.6px;border:1px solid #bdbdbd;border-radius:2.5px;overflow:hidden;background:#e6e6e6"><div class="b" style="left:-1.0px;top:-1px;width:80.5px;height:15.6px;background:linear-gradient(to bottom,rgba(255,255,255,0) 0%,rgba(255,255,255,.3) 48%,rgba(255,255,255,0) 58%,rgba(255,255,255,.28) 100%),linear-gradient(to bottom,#d8f5d8 0%,#d8f5d8 50%,#74d074 58%,#74d074 100%)"></div></div>
<span class="t" style="left:7.00px;top:812.38px;font-size:8.7px;color:#161616;transform:scaleX(0.7671);-webkit-text-stroke:0.2px #161616;">Present</span>
<span class="t" style="left:7.00px;top:831.68px;font-size:8.7px;color:#161616;transform:scaleX(0.7482);-webkit-text-stroke:0.2px #161616;">Lock</span>
<span class="t" style="left:90.00px;top:812.38px;font-size:8.7px;color:#161616;transform:scaleX(0.7666);-webkit-text-stroke:0.2px #161616;">Level: 26%</span>
<span class="t" style="left:90.00px;top:831.68px;font-size:8.7px;color:#161616;transform:scaleX(0.7708);-webkit-text-stroke:0.2px #161616;">Quality: 100%</span>
<span class="t" style="left:602.70px;top:812.38px;font-size:8.7px;color:#161616;transform:scaleX(0.7408);-webkit-text-stroke:0.2px #161616;">BER: 0,0000000</span>
<span class="t" style="left:604.30px;top:831.68px;font-size:8.7px;color:#161616;transform:scaleX(0.7889);-webkit-text-stroke:0.2px #161616;">SNR: 5,3 dB (Margin: 1,3 dB | Very Poor)</span>
<span class="t" style="left:1116.90px;top:812.38px;font-size:8.7px;color:#161616;transform:scaleX(0.8322);-webkit-text-stroke:0.2px #161616;">Input (~63,84 Mbps)</span>
<span class="t" style="left:1116.90px;top:831.68px;font-size:8.7px;color:#161616;transform:scaleX(0.7136);-webkit-text-stroke:0.2px #161616;">Sync TS</span>
<div class="b" style="left:0px;top:849.4px;width:1200px;height:21px;background:#f3f3f3;border-top:1px solid #e2e2e2"></div>
<div class="b" style="left:0px;top:866px;width:1200px;height:2.4px;background:#f8f8f8"></div>
<div class="b" style="left:0px;top:868.4px;width:1200px;height:1.6px;background:#505050"></div>
<div class="b" style="left:393px;top:851px;width:1px;height:16px;background:#b8b8b8"></div>
<div class="b" style="left:792px;top:851px;width:1px;height:16px;background:#b8b8b8"></div>
<span class="t" style="left:151.80px;top:852.54px;font-size:10.8px;color:#1a1a1a;transform:scaleX(0.6820);-webkit-text-stroke:0.15px #1a1a1a;">Locked -&gt; Uptime: 86:13:51</span>
<span class="t" style="left:546.00px;top:852.54px;font-size:10.8px;color:#1a1a1a;transform:scaleX(0.6481);-webkit-text-stroke:0.15px #1a1a1a;">SYNC 202 | TEI 14 | CC 16670</span>
<span class="t" style="left:930.00px;top:852.54px;font-size:10.8px;color:#1a1a1a;transform:scaleX(0.6713);-webkit-text-stroke:0.15px #1a1a1a;">Best signal: 5,7 dB (2023-12-16 05:11)</span>
<div class="b" style="left:1190.5px;top:851px;width:1px;height:16px;background:#c8c8c8"></div>
<svg width="8" height="10" viewBox="0 0 8 10" style="left:1192px;top:858px"><g fill="#9a9a9a"><rect x="4.5" y="0.5" width="1.5" height="1.5"/><rect x="2" y="3.5" width="1.5" height="1.5"/><rect x="4.5" y="3.5" width="1.5" height="1.5"/><rect x="-0.5" y="6.5" width="1.5" height="1.5"/><rect x="2" y="6.5" width="1.5" height="1.5"/><rect x="4.5" y="6.5" width="1.5" height="1.5"/></g></svg>
<span class="t" style="left:759.50px;top:57.17px;font-size:11.6px;color:#151515;transform:scaleX(1.1450);font-weight:bold;-webkit-text-stroke:0.3px #151515;">SES 4-22.0°W_West Africa</span>
<span class="t" style="left:748.00px;top:75.17px;font-size:11.6px;color:#151515;transform:scaleX(1.1042);font-weight:bold;-webkit-text-stroke:0.3px #151515;">PF 450 cm_Lucenec/Slovakia</span>
<span class="t" style="left:739.50px;top:93.17px;font-size:11.6px;color:#151515;transform:scaleX(1.1518);font-weight:bold;-webkit-text-stroke:0.3px #151515;">f=10 986 MHz_V : Canal + Africa</span>
<span class="t" style="left:720.00px;top:110.67px;font-size:11.6px;color:#151515;transform:scaleX(1.1282);font-weight:bold;-webkit-text-stroke:0.3px #151515;">Peak quality in 86 hours : SNR=5.7 dB</span>
<div class="b" style="left:950.5px;top:247.3px;width:154.2px;height:14.8px;background:#fff;border:1px solid #c8c8c8;box-shadow:1.5px 2px 3px rgba(0,0,0,0.35)"></div>
<span class="t" style="left:954.00px;top:248.83px;font-size:9.8px;color:#555;transform:scaleX(0.7007);">2023-12-17 23.27.05, value: 5,40000009536743</span>
<svg width="20" height="22" viewBox="0 0 20 22" style="left:940px;top:226px"><path d="M10 2V20M3 10.7H17.5" stroke="#111" stroke-width="1.4" fill="none"/></svg>
<div class="b" style="left:618px;top:5.6px;width:590px;height:40.1px;background:#fff;border:1.2px solid #222"></div>
<div class="b" style="left:618.5px;top:6.6px;width:116.5px;height:17.5px;background:#f5821f"></div>
<span class="t" style="left:620.25px;top:7.80px;font-size:12.4px;color:#3a1c00;transform:scaleX(0.7606);font-weight:bold;font-style:italic;-webkit-text-stroke:0.35px #3a1c00;">Berlin-Paris-Vienna-Roma</span>
<div class="b" style="left:735px;top:6.6px;width:117px;height:17.5px;background:#2a70d8"></div>
<div class="b" style="left:734.3px;top:6px;width:1.5px;height:39px;background:#222"></div>
<span class="t" style="left:763.05px;top:7.80px;font-size:12.4px;color:#0a1a5a;transform:scaleX(0.8118);font-weight:bold;font-style:italic;-webkit-text-stroke:0.35px #0a1a5a;">London, Eng</span>
<div class="b" style="left:852px;top:6.6px;width:117px;height:17.5px;background:#30d0d0"></div>
<div class="b" style="left:851.3px;top:6px;width:1.5px;height:39px;background:#222"></div>
<span class="t" style="left:878.80px;top:7.80px;font-size:12.4px;color:#0a3a4a;transform:scaleX(0.8221);font-weight:bold;font-style:italic;-webkit-text-stroke:0.35px #0a3a4a;">Cairo-Athens</span>
<div class="b" style="left:969px;top:6.6px;width:117px;height:17.5px;background:#ea1c2c"></div>
<div class="b" style="left:968.3px;top:6px;width:1.5px;height:39px;background:#222"></div>
<span class="t" style="left:1013.70px;top:7.80px;font-size:12.4px;color:#5a0008;transform:scaleX(0.8187);font-weight:bold;font-style:italic;-webkit-text-stroke:0.35px #5a0008;">Dubai</span>
<div class="b" style="left:1086px;top:6.6px;width:117px;height:17.5px;background:#34cc34"></div>
<div class="b" style="left:1085.3px;top:6px;width:1.5px;height:39px;background:#222"></div>
<span class="t" style="left:1123.92px;top:7.80px;font-size:12.4px;color:#083808;transform:scaleX(0.8535);font-weight:bold;font-style:italic;-webkit-text-stroke:0.35px #083808;">Moscow</span>
<div class="b" style="left:618px;top:23.6px;width:590px;height:1.7px;background:#222"></div>
<div class="b" style="left:619px;top:25.3px;width:588px;height:3.2px;background:linear-gradient(to bottom,#b4b4b4,#ffffff)"></div>
<span class="t" style="left:621.00px;top:30.04px;font-size:12px;color:#0a0a0a;transform:scaleX(0.7644);font-weight:bold;-webkit-text-stroke:0.4px #0a0a0a;">Sun, Dec 17</span>
<span class="t" style="left:695.00px;top:30.04px;font-size:12px;color:#0a0a0a;transform:scaleX(0.7494);font-weight:bold;-webkit-text-stroke:0.4px #0a0a0a;">23:29:15</span>
<span class="t" style="left:737.50px;top:30.04px;font-size:12px;color:#0a0a0a;transform:scaleX(0.7644);font-weight:bold;-webkit-text-stroke:0.4px #0a0a0a;">Sun, Dec 17</span>
<span class="t" style="left:811.50px;top:30.04px;font-size:12px;color:#0a0a0a;transform:scaleX(0.7494);font-weight:bold;-webkit-text-stroke:0.4px #0a0a0a;">22:29:15</span>
<span class="t" style="left:799.30px;top:26.90px;font-size:9px;color:#111;transform:scaleX(0.8372);font-weight:bold;-webkit-text-stroke:0.25px #111;">-1</span>
<span class="t" style="left:854.00px;top:30.04px;font-size:12px;color:#0a0a0a;transform:scaleX(0.7598);font-weight:bold;-webkit-text-stroke:0.4px #0a0a0a;">Mon, Dec 18</span>
<span class="t" style="left:934.70px;top:30.04px;font-size:12px;color:#0a0a0a;transform:scaleX(0.7266);font-weight:bold;-webkit-text-stroke:0.4px #0a0a0a;">00:29</span>
<span class="t" style="left:916.30px;top:26.90px;font-size:9px;color:#111;transform:scaleX(0.6529);font-weight:bold;-webkit-text-stroke:0.25px #111;">+1</span>
<span class="t" style="left:971.00px;top:30.04px;font-size:12px;color:#0a0a0a;transform:scaleX(0.7598);font-weight:bold;-webkit-text-stroke:0.4px #0a0a0a;">Mon, Dec 18</span>
<span class="t" style="left:1051.70px;top:30.04px;font-size:12px;color:#0a0a0a;transform:scaleX(0.7266);font-weight:bold;-webkit-text-stroke:0.4px #0a0a0a;">02:29</span>
<span class="t" style="left:1033.30px;top:26.90px;font-size:9px;color:#111;transform:scaleX(0.6529);font-weight:bold;-webkit-text-stroke:0.25px #111;">+3</span>
<span class="t" style="left:1088.00px;top:30.04px;font-size:12px;color:#0a0a0a;transform:scaleX(0.7598);font-weight:bold;-webkit-text-stroke:0.4px #0a0a0a;">Mon, Dec 18</span>
<span class="t" style="left:1168.70px;top:30.04px;font-size:12px;color:#0a0a0a;transform:scaleX(0.7266);font-weight:bold;-webkit-text-stroke:0.4px #0a0a0a;">01:29</span>
<span class="t" style="left:1150.30px;top:26.90px;font-size:9px;color:#111;transform:scaleX(0.6529);font-weight:bold;-webkit-text-stroke:0.25px #111;">+2</span>
<svg width="16" height="8" viewBox="0 0 16 8" style="left:1174px;top:45.5px"><path d="M0 6 L6 0.5 L8 3 L10 0.5 L14 0.5 L13 4 L9 3.5 L6 6Z" fill="#9c9c9c"/></svg>
<div class="b" style="left:496px;top:0px;width:108px;height:104px;background:rgba(255,255,255,0.9)"></div>
<svg width="130" height="110" viewBox="0 0 130 110" style="left:490px;top:0px">
<path d="M22.17 82.25A47.04 47.04 0 0 1 90.31 18.70" fill="none" stroke="#4a50a6" stroke-width="1.85"/>
<path d="M93.96 22.00A47.04 47.04 0 0 1 107.71 56.90" fill="none" stroke="#4a50a6" stroke-width="3.2"/>
<path d="M107.71 56.90A47.04 47.04 0 0 1 95.33 87.10 L25.29 86.62" fill="none" stroke="#4a50a6" stroke-width="1.85"/>
<path d="M90.40 28.52A39.96 39.96 0 0 1 100.66 54.57" fill="none" stroke="#d8483f" stroke-width="3"/>
<path d="M85.66 35.05A32.12 32.12 0 0 1 92.64 51.91" fill="none" stroke="#d8483f" stroke-width="2.8"/>
<ellipse cx="56.53" cy="47.80" rx="35.66" ry="3.79" transform="rotate(69.2 56.53 47.80)" fill="none" stroke="#3c4196" stroke-width="0.8"/>
<path d="M61.71 46.54 L79.92 47.30 L71.83 55.89" fill="none" stroke="#3c4196" stroke-width="0.7" stroke-opacity="0.85"/>
<path d="M46.54 36.04 C47.04 48.05 48.69 56.91 43.63 61.96" fill="none" stroke="#3c4196" stroke-width="0.8"/>
<path d="M43.63 61.71 C53.11 63.23 55.64 74.61 65.13 79.92" fill="none" stroke="#3c4196" stroke-width="1"/>
<circle cx="38.57" cy="66.01" r="3.79" fill="none" stroke="#3c4196" stroke-width="1"/>
<path d="M33.13 68.29 C35.41 73.35 41.73 73.98 44.26 68.92" fill="none" stroke="#3c4196" stroke-width="1"/>
<path d="M25.92 86.62 C34.14 84.73 37.94 80.93 39.46 73.98 C41.10 80.93 44.26 84.73 50.58 86.62Z" fill="#dfe2f4" stroke="#3c4196" stroke-width="0.9"/>
</svg>
<span class="t" style="left:500.00px;top:87.83px;font-size:13.2px;color:#dc4a48;transform:scaleX(1.0000);font-weight:bold;font-family:'Liberation Serif',serif;letter-spacing:0.45px;-webkit-text-stroke:0.35px #dc4a48;">DX</span>
<span class="t" style="left:519.97px;top:87.83px;font-size:13.2px;color:#3a3f98;transform:scaleX(1.0558);font-weight:bold;font-family:'Liberation Serif',serif;-webkit-text-stroke:0.35px #3a3f98;">SATCS.COM</span>
</div></body></html>
